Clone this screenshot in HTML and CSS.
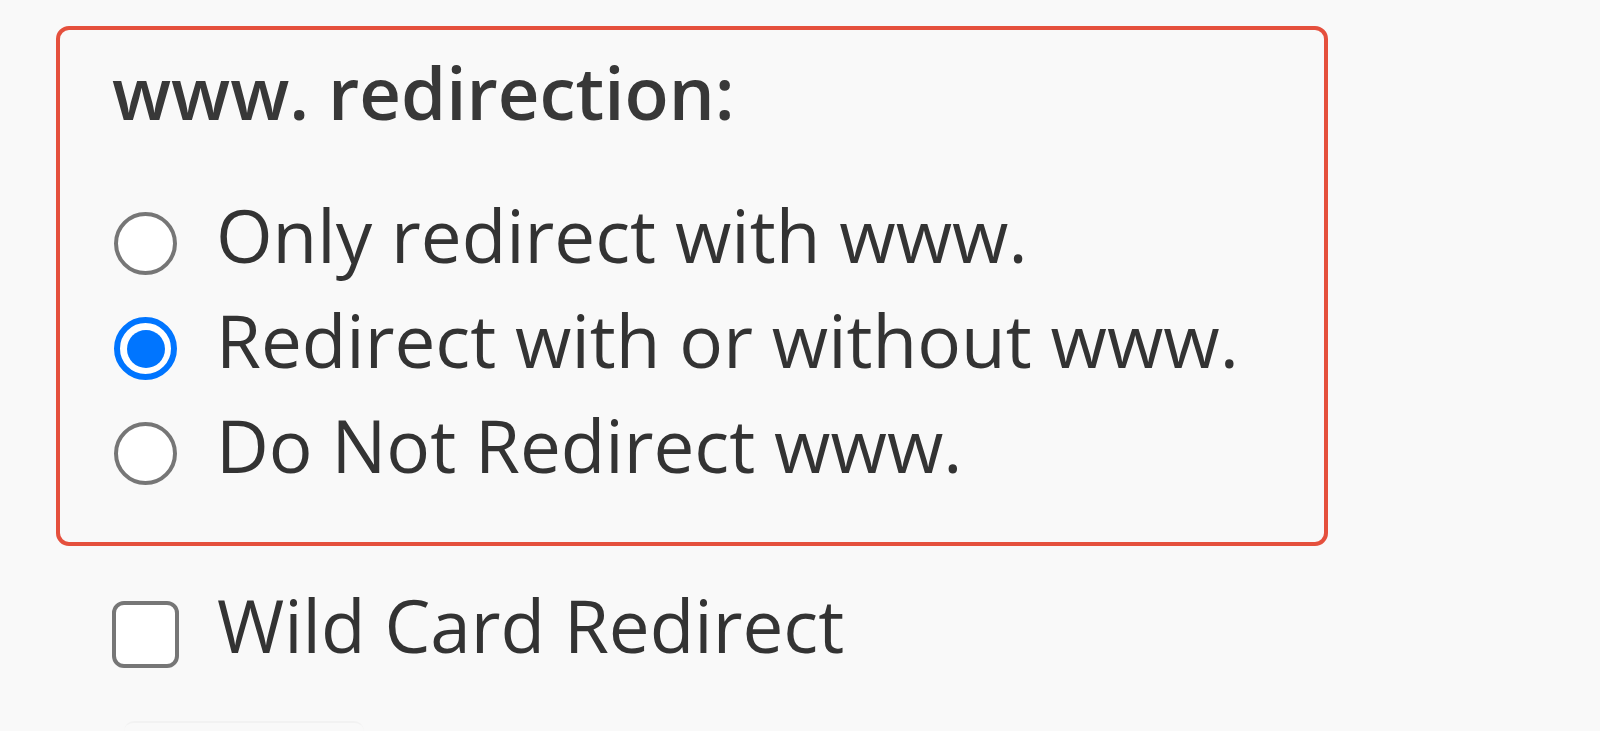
FILE: index.html
```html
<!DOCTYPE html>
<html lang="en">
<head>
<meta charset="utf-8">
<title>www. redirection</title>
<link rel="stylesheet" href="styles.css">
</head>
<body>
<main class="page">
  <fieldset class="redirect-box">
    <div class="heading">www. redirection:</div>
    <div class="options">
      <label class="option"><input class="radio" type="radio" name="www"><span class="label-text">Only redirect with www.</span></label>
      <label class="option"><input class="radio" type="radio" name="www" checked><span class="label-text">Redirect with or without www.</span></label>
      <label class="option"><input class="radio" type="radio" name="www"><span class="label-text">Do Not Redirect www.</span></label>
    </div>
  </fieldset>
  <label class="option wild"><input class="check" type="checkbox"><span class="label-text">Wild Card Redirect</span></label>
  <div class="next-button"></div>
</main>
</body>
</html>
```

FILE: styles.css
```css
html, body {
  margin: 0;
  padding: 0;
  background: #f9f9f9;
  height: 100%;
  overflow: hidden;
}

.page {
  padding: 26px 0 0 56px;
  font-family: "Open Sans", "Noto Sans", sans-serif;
  font-size: 72.8px;
  line-height: 105px;
  color: #333333;
}

.redirect-box {
  box-sizing: border-box;
  width: 1272px;
  height: 520px;
  margin: 0;
  padding: 10px 0 0 52px;
  border: 4.5px solid #e5503d;
  border-radius: 13px;
  display: flex;
  flex-direction: column;
}

.heading {
  font-size: 72.5px;
  font-weight: 600;
  color: #383838;
}

.options {
  margin-top: 37px;
  display: flex;
  flex-direction: column;
}

.option {
  display: flex;
  align-items: flex-start;
  gap: 39px;
  height: 105px;
}

.label-text {
  white-space: nowrap;
}

.radio {
  appearance: none;
  -webkit-appearance: none;
  box-sizing: border-box;
  flex: none;
  width: 63px;
  height: 63px;
  margin: 30px 0 0 2px;
  border: 4.5px solid #767676;
  border-radius: 50%;
  background: #ffffff;
  position: relative;
}

.radio:checked {
  border: 6px solid #0075ff;
}

.radio:checked::after {
  content: "";
  position: absolute;
  left: 6.5px;
  top: 6.5px;
  width: 38px;
  height: 38px;
  border-radius: 50%;
  background: #0075ff;
}

.wild {
  margin: 26px 0 0 56px;
  gap: 38px;
}

.check {
  appearance: none;
  -webkit-appearance: none;
  box-sizing: border-box;
  flex: none;
  width: 67px;
  height: 67px;
  margin: 29px 0 0 0;
  border: 4.5px solid #767676;
  border-radius: 12px;
  background: #ffffff;
}

.next-button {
  margin: 44px 0 0 68px;
  width: 240px;
  height: 40px;
  border-top: 2px solid #f2f2f2;
  border-radius: 10px 10px 0 0;
}
```
